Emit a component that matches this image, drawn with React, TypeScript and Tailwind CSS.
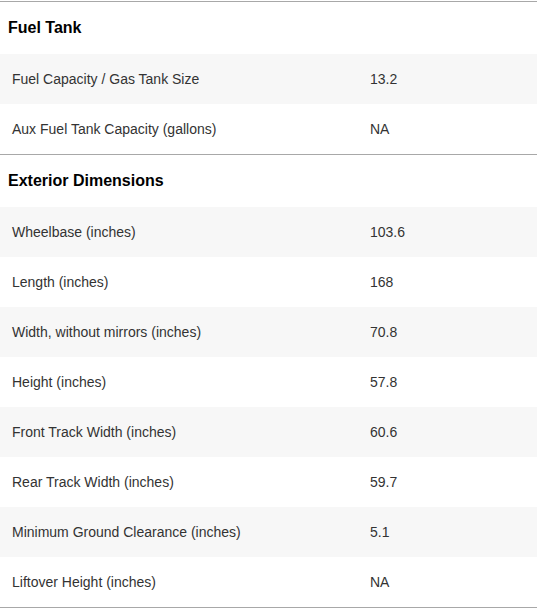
import React from 'react';

interface Spec {
  label: string;
  value: string;
}

interface Section {
  title: string;
  specs: Spec[];
}

const sections: Section[] = [
  {
    title: 'Fuel Tank',
    specs: [
      { label: 'Fuel Capacity / Gas Tank Size', value: '13.2' },
      { label: 'Aux Fuel Tank Capacity (gallons)', value: 'NA' },
    ],
  },
  {
    title: 'Exterior Dimensions',
    specs: [
      { label: 'Wheelbase (inches)', value: '103.6' },
      { label: 'Length (inches)', value: '168' },
      { label: 'Width, without mirrors (inches)', value: '70.8' },
      { label: 'Height (inches)', value: '57.8' },
      { label: 'Front Track Width (inches)', value: '60.6' },
      { label: 'Rear Track Width (inches)', value: '59.7' },
      { label: 'Minimum Ground Clearance (inches)', value: '5.1' },
      { label: 'Liftover Height (inches)', value: 'NA' },
    ],
  },
];

const SpecSection = ({ section }: { section: Section }) => (
  <div className="border-t border-[#a8a8a8]">
    <div className="h-[52px] flex items-center px-2 text-[16px] font-bold text-black">
      {section.title}
    </div>
    {section.specs.map((spec, i) => (
      <div
        key={spec.label}
        className={`h-[50px] grid grid-cols-[358px_1fr] items-center px-3 text-[14px] text-[#333333] ${
          i % 2 === 0 ? 'bg-[#f7f7f7]' : 'bg-white'
        }`}
      >
        <span>{spec.label}</span>
        <span>{spec.value}</span>
      </div>
    ))}
  </div>
);

export default function App() {
  return (
    <div className="w-[537px] pt-px bg-white font-['Liberation_Sans',Arial,sans-serif]">
      {sections.map((s) => (
        <SpecSection key={s.title} section={s} />
      ))}
      <div className="border-t border-[#a8a8a8]" />
    </div>
  );
}
